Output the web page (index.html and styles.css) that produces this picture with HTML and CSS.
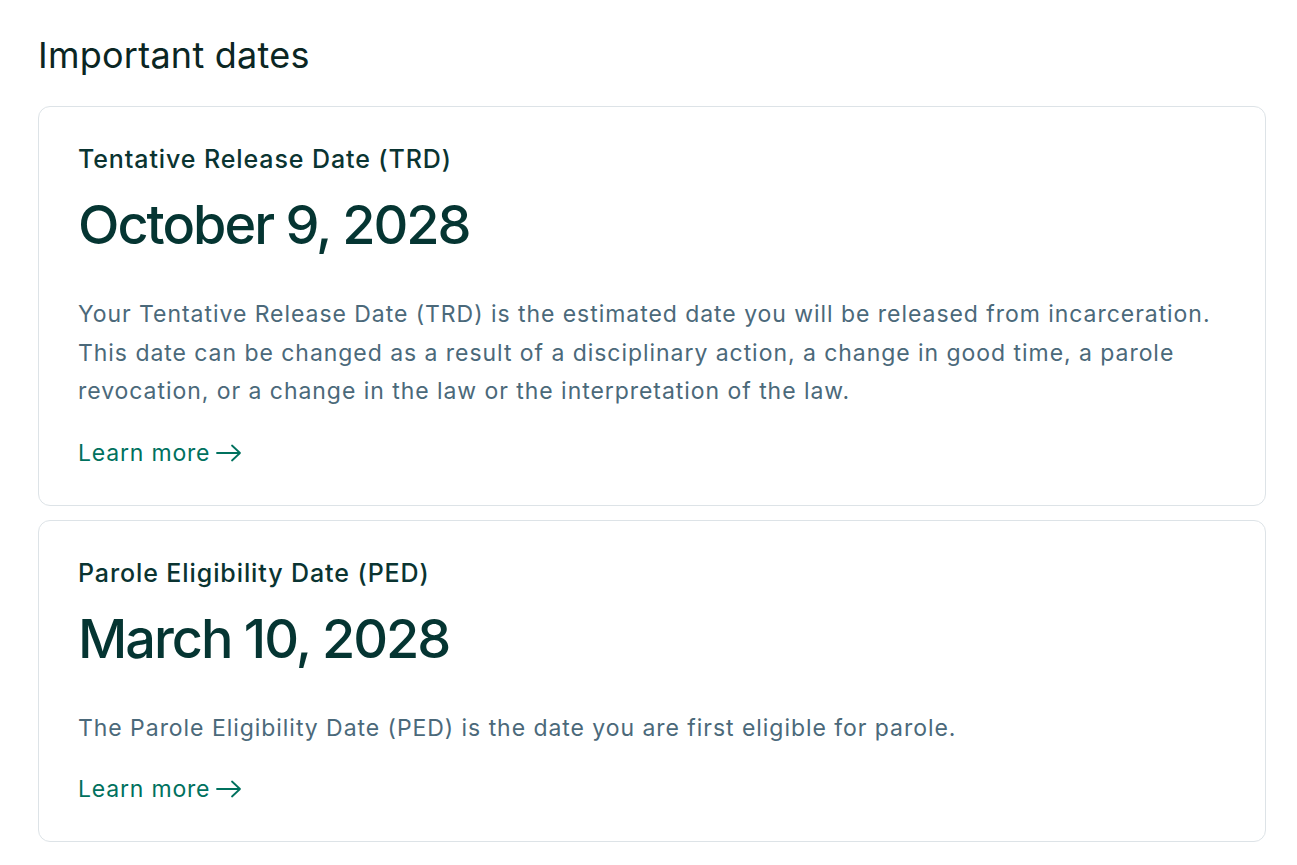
FILE: index.html
```html
<!DOCTYPE html>
<html lang="en">
<head>
<meta charset="utf-8">
<title>Important dates</title>
<link rel="stylesheet" href="styles.css">
</head>
<body>
<main class="page">
  <h1 class="page-title">Important dates</h1>
  <section class="card">
    <h2 class="card-label">Tentative Release Date (TRD)</h2>
    <p class="card-date">October 9, 2028</p>
    <p class="card-text">Your Tentative Release Date (TRD) is the estimated date you will be released from incarceration. This date can be changed as a result of a disciplinary action, a change in good time, a parole revocation, or a change in the law or the interpretation of the law.</p>
    <a class="card-link" href="#">Learn more <svg class="arrow" width="26" height="18" viewBox="0 0 26 18" fill="none" stroke="currentColor" stroke-width="1.8" stroke-linecap="round" stroke-linejoin="round"><path d="M1 9h23M16 1.5 24 9l-8 7.5"/></svg></a>
  </section>
  <section class="card">
    <h2 class="card-label">Parole Eligibility Date (PED)</h2>
    <p class="card-date">March 10, 2028</p>
    <p class="card-text">The Parole Eligibility Date (PED) is the date you are first eligible for parole.</p>
    <a class="card-link" href="#">Learn more <svg class="arrow" width="26" height="18" viewBox="0 0 26 18" fill="none" stroke="currentColor" stroke-width="1.8" stroke-linecap="round" stroke-linejoin="round"><path d="M1 9h23M16 1.5 24 9l-8 7.5"/></svg></a>
  </section>
</main>
</body>
</html>
```

FILE: styles.css
```css
* { box-sizing: border-box; }
html, body { margin: 0; padding: 0; background: #ffffff; }
body {
  font-family: "Inter", "Noto Sans", sans-serif;
  color: #0b2f2b;
}
.page {
  padding: 29px 31px 20px 38px;
  display: flex;
  flex-direction: column;
  gap: 14px;
}
.page-title {
  margin: 0 0 11px;
  font-size: 36px;
  font-weight: 400;
  line-height: 52px;
  letter-spacing: 0.25px;
  color: #0b2623;
}
.card {
  border: 1px solid #dde3e7;
  border-radius: 12px;
  padding: 36px 39px 34px;
  display: flex;
  flex-direction: column;
  align-items: flex-start;
}
.card-label {
  margin: 0;
  font-size: 25px;
  font-weight: 500;
  line-height: 32px;
  color: #0a3431;
  letter-spacing: 0.9px;
}
.card-date {
  margin: 18px 0 0;
  font-size: 54px;
  font-weight: 500;
  line-height: 64px;
  color: #053532;
  letter-spacing: -2px;
}
.card-text {
  margin: 38px 0 0;
  font-size: 23px;
  line-height: 38.5px;
  letter-spacing: 0.95px;
  color: #4b697a;
}
.card-link {
  margin-top: 24px;
  font-size: 23px;
  line-height: 36px;
  letter-spacing: 0.8px;
  color: #00715e;
  text-decoration: none;
  display: inline-flex;
  align-items: center;
  gap: 6px;
}
.arrow { display: block; }
```
